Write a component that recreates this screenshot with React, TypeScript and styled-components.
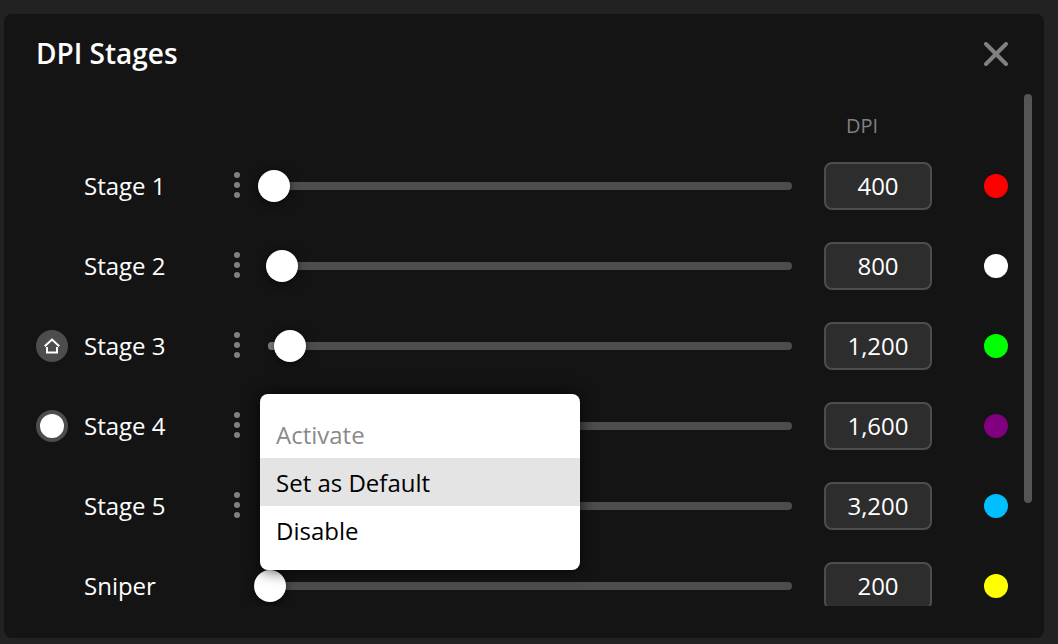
import * as React from 'react';
import styled, { createGlobalStyle } from 'styled-components';

const GlobalStyle = createGlobalStyle`
    html, body {
        margin: 0;
        height: 100%;
        background: #222222;
        overflow: hidden;
    }
    body {
        font-family: "Open Sans", "Liberation Sans", sans-serif;
    }
`;

const Page = styled.div`
    width: 1058px;
    height: 644px;
    padding: 14px 14px 6px 4px;
    box-sizing: border-box;
`;

const Dialog = styled.div`
    position: relative;
    display: flex;
    flex-direction: column;
    width: 1040px;
    height: 624px;
    background: #141414;
    border-radius: 8px;
    color: #ffffff;
`;

const Header = styled.div`
    display: flex;
    flex: none;
    justify-content: space-between;
    align-items: center;
    height: 80px;
    padding: 0 36px 0 32px;
`;

const Title = styled.div`
    font-size: 28px;
    font-weight: 600;
    line-height: 38px;
    padding-bottom: 2px;
`;

const CloseIcon = styled.svg`
    display: block;
    width: 24px;
    height: 24px;
    stroke: #808080;
    stroke-width: 4;
    stroke-linecap: round;
    fill: none;
`;

const Body = styled.div`
    height: 512px;
    overflow: hidden;
    padding-left: 32px;
`;

const ColumnHeads = styled.div`
    height: 52px;
    padding: 20px 0 0 810px;
    box-sizing: border-box;
    font-size: 20px;
    line-height: 23px;
    color: #808080;
`;

const Row = styled.div`
    display: grid;
    grid-template-columns: 48px 150px 34px 556px 160px 24px;
    align-items: center;
    height: 80px;
`;

const Marker = styled.div<{ $kind: 'home' | 'active' }>`
    display: flex;
    align-items: center;
    justify-content: center;
    width: 32px;
    height: 32px;
    box-sizing: border-box;
    border-radius: 50%;
    background: ${p => (p.$kind === 'active' ? '#ffffff' : '#4d4d4d')};
    border: ${p => (p.$kind === 'active' ? '4px solid #4d4d4d' : 'none')};
`;

const HomeIcon = styled.svg`
    display: block;
    width: 32px;
    height: 32px;
    fill: none;
    stroke: #ffffff;
    stroke-width: 2;
    stroke-linecap: square;
`;

const StageName = styled.div`
    font-size: 24px;
    line-height: 33px;
    padding-bottom: 1px;
`;

const Dots = styled.div`
    display: flex;
    flex-direction: column;
    gap: 4px;
    width: 6px;
    padding-bottom: 2px;
`;

const Dot = styled.span`
    width: 6px;
    height: 6px;
    border-radius: 50%;
    background: #808080;
`;

const Slider = styled.div`
    position: relative;
    width: 524px;
    height: 8px;
    border-radius: 4px;
    background: #4d4d4d;
`;

const SliderFill = styled.div`
    height: 8px;
    border-radius: 4px 0 0 4px;
    background: #808080;
`;

const Thumb = styled.div`
    position: absolute;
    top: -12px;
    width: 32px;
    height: 32px;
    margin-left: -16px;
    border-radius: 50%;
    background: #ffffff;
    box-shadow: 0 2px 8px rgba(0, 0, 0, 0.6);
`;

const DpiValue = styled.div`
    width: 108px;
    height: 48px;
    box-sizing: border-box;
    border: 2px solid #4d4d4d;
    border-radius: 8px;
    background: #2d2d2d;
    font-size: 24px;
    line-height: 43px;
    text-align: center;
`;

const Swatch = styled.div<{ $color: string }>`
    width: 24px;
    height: 24px;
    border-radius: 50%;
    background: ${p => p.$color};
`;

const ScrollThumb = styled.div`
    position: absolute;
    top: 80px;
    left: 1020px;
    width: 8px;
    height: 409px;
    border-radius: 4px;
    background: #555555;
`;

const Menu = styled.div`
    position: absolute;
    top: 380px;
    left: 256px;
    width: 320px;
    padding: 16px 0;
    border-radius: 8px;
    background: #ffffff;
    box-shadow: 0 0 16px rgba(0, 0, 0, 0.8);
`;

const MenuItem = styled.div<{ $disabled?: boolean; $hover?: boolean }>`
    height: 48px;
    padding: 0 16px;
    font-size: 24px;
    line-height: 49px;
    color: ${p => (p.$disabled ? '#8a8a8a' : '#000000')};
    background: ${p => (p.$hover ? '#e4e4e4' : 'transparent')};
`;

const stages = [
    { name: 'Stage 1', dpi: 400, color: '#ff0000' },
    { name: 'Stage 2', dpi: 800, color: '#ffffff' },
    { name: 'Stage 3', dpi: 1200, color: '#00ff00', marker: 'home' as const },
    { name: 'Stage 4', dpi: 1600, color: '#800080', marker: 'active' as const },
    { name: 'Stage 5', dpi: 3200, color: '#00bfff' },
    { name: 'Sniper', dpi: 200, color: '#ffff00', noMenu: true },
];

function StageRow(props: { name: string, dpi: number, color: string, marker?: 'home' | 'active', noMenu?: boolean })
{
    const thumbLeft = props.dpi / 50 - 2;

    return (
        <Row>
            <div>
                {props.marker ? (
                    <Marker $kind={props.marker}>
                        {props.marker === 'home' ? (
                            <HomeIcon viewBox="0 0 32 32">
                                <path d="M9.5 15.5 L16 9.5 L22.5 15.5" />
                                <path d="M11 18 V22.5 H21 V18" />
                            </HomeIcon>
                        ) : null}
                    </Marker>
                ) : null}
            </div>
            <StageName>{props.name}</StageName>
            <div>
                {props.noMenu ? null : (
                    <Dots>
                        <Dot />
                        <Dot />
                        <Dot />
                    </Dots>
                )}
            </div>
            <Slider>
                <SliderFill style={{ width: thumbLeft }} />
                <Thumb style={{ left: thumbLeft }} />
            </Slider>
            <DpiValue>{props.dpi.toLocaleString('en-US')}</DpiValue>
            <Swatch $color={props.color} />
        </Row>
    );
}

export default function App()
{
    return (
        <Page>
            <GlobalStyle />
            <Dialog>
                <Header>
                    <Title>DPI Stages</Title>
                    <CloseIcon viewBox="0 0 24 24">
                        <path d="M2 2 L22 22 M22 2 L2 22" />
                    </CloseIcon>
                </Header>
                <Body>
                    <ColumnHeads>DPI</ColumnHeads>
                    {stages.map(s => <StageRow key={s.name} {...s} />)}
                </Body>
                <ScrollThumb />
                <Menu>
                    <MenuItem $disabled>Activate</MenuItem>
                    <MenuItem $hover>Set as Default</MenuItem>
                    <MenuItem>Disable</MenuItem>
                </Menu>
            </Dialog>
        </Page>
    );
}
